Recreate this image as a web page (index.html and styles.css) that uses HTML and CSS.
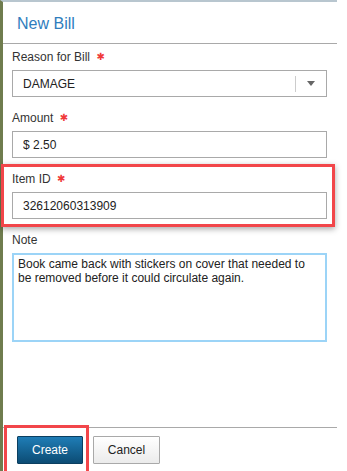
FILE: index.html
```html
<!DOCTYPE html>
<html lang="en">
<head>
    <meta charset="UTF-8">
    <meta name="viewport" content="width=device-width, initial-scale=1.0">
    <title>New Bill</title>
    <link rel="stylesheet" href="styles.css">
</head>
<body>
    <div class="backdrop">
        <div class="modal">
            <div class="modal-header">
                <h2>New Bill</h2>
            </div>

            <form class="modal-body">
                <div class="field">
                    <label>Reason for Bill <span class="req">✱</span></label>
                    <div class="select">
                        <span class="select-value">DAMAGE</span>
                        <span class="select-sep"></span>
                        <span class="select-arrow"></span>
                    </div>
                </div>

                <div class="field">
                    <label for="amount">Amount <span class="req">✱</span></label>
                    <input type="text" id="amount" class="text-input" value="$ 2.50">
                </div>

                <div class="field field-marked">
                    <label for="itemId">Item ID <span class="req">✱</span></label>
                    <input type="text" id="itemId" class="text-input" value="32612060313909">
                </div>

                <div class="field">
                    <label for="note">Note</label>
                    <textarea id="note" class="note-input">Book came back with stickers on cover that needed to be removed before it could circulate again.</textarea>
                </div>
            </form>

            <div class="modal-footer">
                <button type="button" class="btn btn-primary btn-marked">Create</button>
                <button type="button" class="btn">Cancel</button>
            </div>
        </div>
    </div>
</body>
</html>
```

FILE: styles.css
```css
* {
    margin: 0;
    padding: 0;
    box-sizing: border-box;
}

body {
    font-family: 'Liberation Sans', Arial, sans-serif;
    font-size: 12px;
    color: #222;
    background: #fff;
    height: 471px;
    overflow: hidden;
}

/* Page behind the dialog, only a sliver shows */
.backdrop {
    width: 337px;
    height: 100%;
    border-top: 2px solid #b8c6cf;
    border-left: 3px solid #6f7c4e;
}

.modal {
    width: 334px;
    height: 100%;
    background: #fff;
    display: flex;
    flex-direction: column;
}

/* Header */
.modal-header {
    padding: 12px 14px 9px;
    border-bottom: 1px solid #a9a9a9;
}

.modal-header h2 {
    font-size: 16px;
    font-weight: normal;
    line-height: 20px;
    color: #2f7dbd;
}

/* Body */
.modal-body {
    flex: 1;
    padding: 6px 10px 0 9px;
}

.field {
    position: relative;
    margin-bottom: 14px;
}

.field label {
    display: block;
    line-height: 14px;
    margin-bottom: 6px;
    color: #333;
}

.req {
    color: #f03a3a;
    font-family: 'DejaVu Sans', sans-serif;
    font-size: 10px;
    vertical-align: 1px;
    margin-left: 3px;
}

.select,
.text-input {
    display: flex;
    align-items: center;
    width: 315px;
    height: 27px;
    border: 1px solid #a9a9a9;
    background: #fff;
    padding: 0 10px;
    font-family: inherit;
    font-size: 12px;
    color: #222;
}

.text-input {
    display: block;
    outline: none;
}

.select-value {
    flex: 1;
}

.select-sep {
    width: 1px;
    height: 16px;
    background: #ccc;
    margin-right: 11px;
}

.select-arrow {
    width: 0;
    height: 0;
    border-left: 4px solid transparent;
    border-right: 4px solid transparent;
    border-top: 5px solid #666;
    margin-right: 1px;
}

.note-input {
    display: block;
    width: 315px;
    height: 89px;
    border: 2px solid #9cd4f7;
    padding: 2px 4px;
    font-family: inherit;
    font-size: 12px;
    line-height: 14px;
    color: #222;
    resize: none;
    outline: none;
}

/* Footer */
.modal-footer {
    display: flex;
    gap: 10px;
    padding: 8px 14px 7px;
    border-top: 1px solid #a9a9a9;
}

.btn {
    position: relative;
    height: 28px;
    width: 67px;
    border: 1px solid #a9a9a9;
    border-radius: 1px;
    background: linear-gradient(#ffffff, #ebebeb);
    font-family: inherit;
    font-size: 12px;
    color: #222;
    cursor: pointer;
}

.btn-primary {
    width: 66px;
    border-color: #0b3f60;
    background: linear-gradient(#1f7db6, #0c4c74);
    color: #fff;
}

/* Red annotation boxes drawn over the screenshot */
.field-marked::after,
.btn-marked::after {
    content: '';
    position: absolute;
    border: 3px solid #f2464a;
    pointer-events: none;
}

.field-marked::after {
    top: -8px;
    left: -11px;
    right: -8px;
    bottom: -8px;
    box-shadow: 0 2px 6px rgba(0, 0, 0, 0.35);
}

.btn-marked::after {
    top: -12px;
    left: -14px;
    right: -7px;
    bottom: -12px;
}
```
